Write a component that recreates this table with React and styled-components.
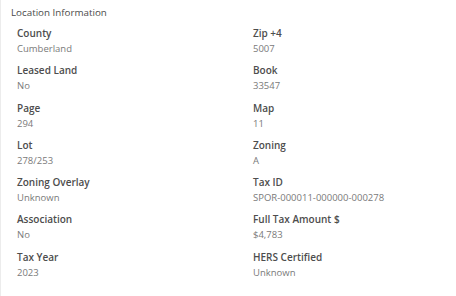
import styled, { createGlobalStyle } from 'styled-components'

const GlobalStyle = createGlobalStyle`
  body {
    margin: 0;
    background: #fff;
    font-family: "Open Sans", "Liberation Sans", sans-serif;
  }
`;

const Panel = styled.section`
  width: 456px;
  height: 296px;
  box-sizing: border-box;
  border-left: 1px solid #ececec;
  padding: 6px 0 0 10px;
`;

const Title = styled.h2`
  margin: 0;
  font-size: 9.8px;
  line-height: 14px;
  font-weight: 400;
  color: #4a4a4a;
`;

const Grid = styled.div`
  display: grid;
  grid-template-columns: 236px 1fr;
  row-gap: 7.3px;
  margin-top: 6px;
  padding-left: 6px;
`;

const Field = styled.div`
  display: flex;
  flex-direction: column;
`;

const Label = styled.span`
  font-size: 10px;
  line-height: 15px;
  font-weight: 600;
  color: #4d4d4d;
`;

const Value = styled.span`
  font-size: 9.5px;
  line-height: 15px;
  color: #7a7a7a;
`;

const fields = [
  ['County', 'Cumberland'],
  ['Zip +4', '5007'],
  ['Leased Land', 'No'],
  ['Book', '33547'],
  ['Page', '294'],
  ['Map', '11'],
  ['Lot', '278/253'],
  ['Zoning', 'A'],
  ['Zoning Overlay', 'Unknown'],
  ['Tax ID', 'SPOR-000011-000000-000278'],
  ['Association', 'No'],
  ['Full Tax Amount $', '$4,783'],
  ['Tax Year', '2023'],
  ['HERS Certified', 'Unknown'],
];

const LocationInfo = () => {
  return (
    <Panel>
      <Title>Location Information</Title>
      <Grid>
        {fields.map(([label, value]) => (
          <Field key={label}>
            <Label>{label}</Label>
            <Value>{value}</Value>
          </Field>
        ))}
      </Grid>
    </Panel>
  )
}

export default function App() {
  return (
    <>
      <GlobalStyle />
      <LocationInfo />
    </>
  )
}
